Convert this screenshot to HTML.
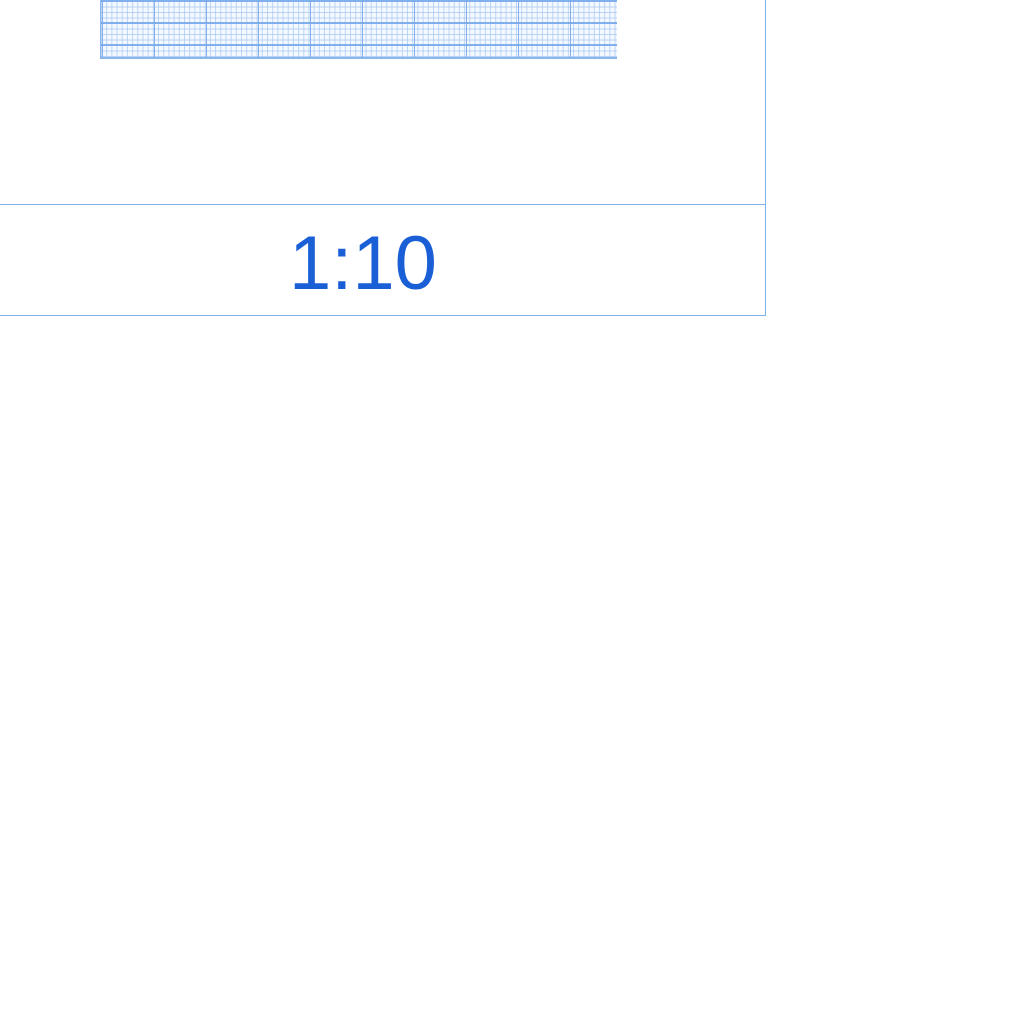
<!DOCTYPE html>
<html><head><style>
html,body{margin:0;width:1024px;height:1024px;background:#fff;overflow:hidden;position:relative;font-family:"Liberation Sans",sans-serif}
.box{position:absolute;left:-2px;top:-2px;width:766px;height:316px;border:1px solid #7fb0ee}
.line{position:absolute;left:0;top:204px;width:765px;height:1px;background:#7fb0ee}
.grid{position:absolute;left:100px;top:0;width:517px;height:59px;
background-color:#f4f8ff;
background-image:
linear-gradient(to right,rgba(120,170,235,.9) 1px,transparent 1px),
linear-gradient(to bottom,rgba(120,170,235,.9) 2px,transparent 2px),
linear-gradient(to right,rgba(150,190,240,.6) 1px,transparent 1px),
linear-gradient(to bottom,rgba(150,190,240,.6) 1px,transparent 1px);
background-size:52px 100%,100% 22px,5.2px 100%,100% 5.5px;
background-position:1px 0,0 0,0 0,0 1px;
border-bottom:2px solid #8ab6ee;border-left:1px solid #8ab6ee;box-sizing:border-box}
.t{position:absolute;left:0;width:726px;top:219px;text-align:center;font-size:76px;color:#1a5fd6;line-height:90px}
</style></head><body>
<div class="box"></div><div class="line"></div>
<div class="grid"></div>
<div class="t">1:10</div>
</body></html>
